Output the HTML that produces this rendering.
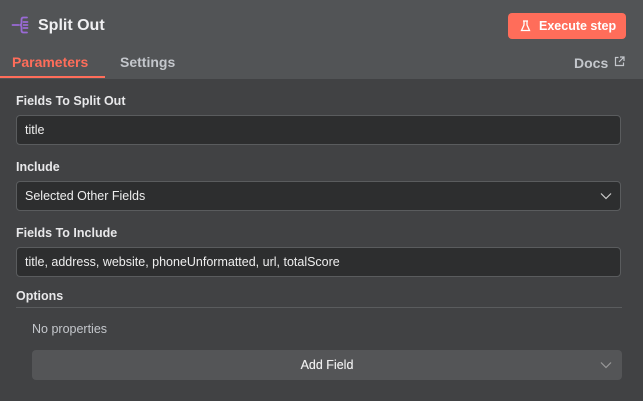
<!DOCTYPE html><html><head><style>
body{margin:0;width:643px;height:401px;background:#414244;font-family:"Liberation Sans",sans-serif;overflow:hidden;position:relative}
.hdr{position:absolute;left:0;top:0;width:643px;height:79px;background:#525456}
.a{position:absolute}
.lbl{position:absolute;left:16px;color:#e8e8ea;font-size:12.5px;font-weight:bold}
.inp{position:absolute;left:16px;width:603px;height:28px;background:#2d2e2f;border:1px solid #5a5c5e;border-radius:4px;color:#eee;font-size:12.5px;line-height:28px;box-sizing:content-box;text-indent:8px}
</style></head><body>
<div class="hdr"></div>
<svg class="a" style="left:11px;top:16px" width="20" height="18" viewBox="0 0 20 18" fill="none" stroke="#9a6ad6" stroke-width="1.8" stroke-linecap="round"><path d="M1.5 9h6M16 1.5h-3.5q-2 0-2 2V6.5q0 2.5-2 2.5q2 0 2 2.5v3q0 2 2 2H16M12.5 6h4M12.5 9h4M12.5 12h4"/></svg>
<div class="a" style="left:38px;top:17px;color:#f0f0f2;font-size:16px;font-weight:bold">Split Out</div>
<div class="a" style="left:508px;top:13px;width:118px;height:26px;background:#ff6d5a;border-radius:4px;color:#fff;font-size:12.5px;font-weight:bold;line-height:26px"><svg class="a" style="left:12px;top:7px" width="11" height="12" viewBox="0 0 11 12" fill="none" stroke="#fff" stroke-width="1.3"><path d="M3 1h5M4 1v4L1.5 10.5h8L7 5V1"/></svg><span style="position:absolute;left:31px">Execute step</span></div>
<div class="a" style="left:12px;top:54px;color:#ff6d5a;font-size:14px;font-weight:bold">Parameters</div>
<div class="a" style="left:0;top:76px;width:105px;height:2px;background:#ff6d5a"></div>
<div class="a" style="left:120px;top:54px;color:#c4c7cc;font-size:14px;font-weight:bold">Settings</div>
<div class="a" style="left:574px;top:55px;color:#c4c7cc;font-size:14px;font-weight:bold">Docs</div>
<svg class="a" style="left:614px;top:56px" width="11" height="11" viewBox="0 0 11 11" fill="none" stroke="#c4c7cc" stroke-width="1.2"><path d="M4.5 1.5H1.5v8h8V6.5M6 1h4v4M10 1L5 6"/></svg>
<div class="lbl" style="top:94px">Fields To Split Out</div>
<div class="inp" style="top:115px">title</div>
<div class="lbl" style="top:160px">Include</div>
<div class="inp" style="top:181px">Selected Other Fields</div>
<svg class="a" style="left:600px;top:192px" width="12" height="8" viewBox="0 0 12 8" fill="none" stroke="#ccc" stroke-width="1.2"><path d="M1 1.5l5 5 5-5"/></svg>
<div class="lbl" style="top:226px">Fields To Include</div>
<div class="inp" style="top:247px">title, address, website, phoneUnformatted, url, totalScore</div>
<div class="lbl" style="top:289px">Options</div>
<div class="a" style="left:16px;top:307px;width:606px;height:1px;background:#5a5c5e"></div>
<div class="a" style="left:32px;top:322px;color:#c4c7cc;font-size:12.5px">No properties</div>
<div class="a" style="left:32px;top:350px;width:590px;height:30px;background:#545557;border-radius:4px;color:#eee;font-size:12.5px;text-align:center;line-height:30px;text-shadow:0 0 0.4px #eee">Add Field</div>
<svg class="a" style="left:600px;top:361px" width="12" height="8" viewBox="0 0 12 8" fill="none" stroke="#999" stroke-width="1.2"><path d="M1 1.5l5 5 5-5"/></svg>
</body></html>
